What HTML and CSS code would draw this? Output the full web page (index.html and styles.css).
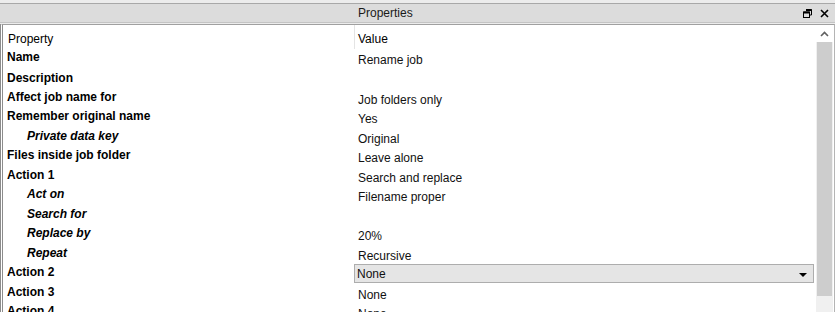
FILE: index.html
```html
<!DOCTYPE html>
<html lang="en">

<head>
    <meta charset="UTF-8">
    <title>Properties</title>
    <link rel="stylesheet" href="styles.css">
</head>

<body>
    <div class="panel">
        <div class="titlebar">
            <span class="title">Properties</span>
            <span class="buttons">
                <svg width="9" height="9" viewBox="0 0 9 9">
                    <path d="M3 0.5h5.5v5.5h-2" fill="none" stroke="#000" stroke-width="1"/>
                    <rect x="0.5" y="3" width="6" height="5.5" fill="none" stroke="#000" stroke-width="1"/>
                    <path d="M0.5 3.5h6 M3 1h5.5" stroke="#000" stroke-width="2"/>
                </svg>
                <svg width="9" height="9" viewBox="0 0 9 9">
                    <path d="M1 1L8 8M8 1L1 8" stroke="#000" stroke-width="1.6"/>
                </svg>
            </span>
        </div>
        <div class="frame">
            <div class="content">
                <div class="head">
                    <div class="col-name">Property</div>
                    <div class="col-value">Value</div>
                </div>
                <div class="row first"><div class="key">Name</div><div class="val">Rename job</div></div>
                <div class="row desc"><div class="key">Description</div><div class="val"></div></div>
                <div class="row"><div class="key">Affect job name for</div><div class="val">Job folders only</div></div>
                <div class="row"><div class="key">Remember original name</div><div class="val">Yes</div></div>
                <div class="row"><div class="key sub">Private data key</div><div class="val">Original</div></div>
                <div class="row"><div class="key">Files inside job folder</div><div class="val">Leave alone</div></div>
                <div class="row"><div class="key">Action 1</div><div class="val">Search and replace</div></div>
                <div class="row"><div class="key sub">Act on</div><div class="val">Filename proper</div></div>
                <div class="row"><div class="key sub">Search for</div><div class="val"></div></div>
                <div class="row"><div class="key sub">Replace by</div><div class="val">20%</div></div>
                <div class="row"><div class="key sub">Repeat</div><div class="val">Recursive</div></div>
                <div class="row"><div class="key">Action 2</div>
                    <div class="val combo"><span>None</span><span class="arrow"></span></div>
                </div>
                <div class="row"><div class="key">Action 3</div><div class="val">None</div></div>
                <div class="row"><div class="key">Action 4</div><div class="val">None</div></div>
            </div>
            <div class="scrollbar">
                <div class="up">
                    <svg width="9" height="6" viewBox="0 0 9 6">
                        <path d="M1 5L4.5 1.5L8 5" fill="none" stroke="#606060" stroke-width="1.6"/>
                    </svg>
                </div>
                <div class="thumb"></div>
            </div>
        </div>
    </div>
</body>

</html>
```
FILE: styles.css
```css
* {
    margin: 0;
    padding: 0;
    box-sizing: border-box;
}

body {
    font-family: "Liberation Sans", Arial, sans-serif;
    font-size: 12px;
    color: #000;
    background: #f0f0f0;
}

.panel {
    width: 835px;
    height: 312px;
    overflow: hidden;
    padding-top: 3px;
    background: #ececec;
}

/* title bar of the docked window */
.titlebar {
    height: 20px;
    display: flex;
    align-items: center;
    background: #dcdcdc;
    border-top: 1px solid #a8a8a8;
    border-bottom: 1px solid #c4c4c4;
}

.title {
    flex: 1;
    padding-left: 358px;
    color: #1a1a1a;
}

.buttons {
    display: flex;
    gap: 8px;
    padding-right: 6px;
    padding-top: 1px;
}

.frame {
    margin-top: 1px;
    height: 300px;
    display: flex;
    background: #fff;
    border-top: 1px solid #a0a0a0;
    border-left: 3px double #8c8c8c;
    border-right: 1px solid #b4b4b4;
}

.content {
    width: 813px;
}

.head {
    display: flex;
    height: 24px;
}

.col-name {
    width: 351px;
    padding: 7px 0 0 5px;
}

.col-value {
    flex: 1;
    border-left: 1px solid #e4e4e4;
    padding: 7px 0 0 3px;
}

/* rows alternate 20/19 px, like the 19.5px pitch of the original */
.row {
    display: flex;
    height: 20px;
}

.row:nth-child(even) {
    height: 19px;
}

.row.first {
    height: 21px;
}

.row.desc {
    height: 19px;
}

.key {
    width: 351px;
    padding: 1px 0 0 4px;
    font-weight: bold;
}

.key.sub {
    padding-left: 24px;
    font-style: italic;
}

.val {
    flex: 1;
    padding: 4px 0 0 4px;
    color: #111;
}

.combo {
    display: flex;
    justify-content: space-between;
    flex: none;
    width: 460px;
    height: 19px;
    padding: 2px 0 0 2px;
    background: #e5e5e5;
    border: 1px solid #adadad;
}

.arrow {
    width: 0;
    height: 0;
    margin: 6px 6px 0 0;
    border-left: 4px solid transparent;
    border-right: 4px solid transparent;
    border-top: 4px solid #000;
}

.scrollbar {
    width: 17px;
    background: #f0f0f0;
    display: flex;
    flex-direction: column;
}

.up {
    height: 17px;
    display: flex;
    align-items: center;
    justify-content: center;
    background: #fff;
}

.thumb {
    height: 254px;
    margin: 0 1px;
    background: #cdcdcd;
}
```
